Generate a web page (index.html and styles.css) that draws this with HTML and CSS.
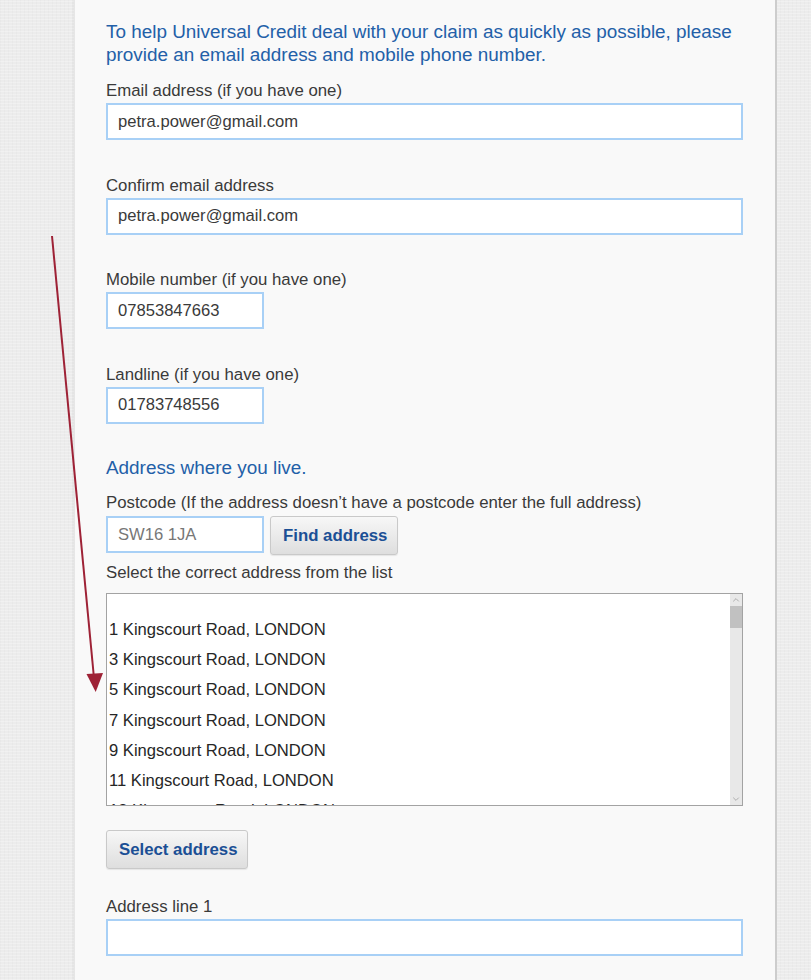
FILE: index.html
```html
<!DOCTYPE html>
<html lang="en">
<head>
<meta charset="utf-8">
<title>Contact details</title>
<link rel="stylesheet" href="styles.css">
</head>
<body>
<div class="page">
  <main class="panel">
    <h2 class="intro">To help Universal Credit deal with your claim as quickly as possible, please provide an email address and mobile phone number.</h2>

    <div class="field">
      <label class="label">Email address (if you have one)</label>
      <input class="input wide" type="text" value="petra.power@gmail.com">
    </div>
    <div class="field">
      <label class="label">Confirm email address</label>
      <input class="input wide" type="text" value="petra.power@gmail.com">
    </div>
    <div class="field">
      <label class="label">Mobile number (if you have one)</label>
      <input class="input short" type="text" value="07853847663">
    </div>
    <div class="field last">
      <label class="label">Landline (if you have one)</label>
      <input class="input short" type="text" value="01783748556">
    </div>

    <h2 class="section">Address where you live.</h2>
    <label class="label postcode-label">Postcode (If the address doesn’t have a postcode enter the full address)</label>
    <div class="postcode-row">
      <input class="input short muted" type="text" value="SW16 1JA">
      <button class="btn" type="button">Find address</button>
    </div>
    <label class="label list-label">Select the correct address from the list</label>
    <div class="listbox">
      <ul class="options">
        <li class="opt blank"></li>
        <li class="opt">1 Kingscourt Road, LONDON</li>
        <li class="opt">3 Kingscourt Road, LONDON</li>
        <li class="opt">5 Kingscourt Road, LONDON</li>
        <li class="opt">7 Kingscourt Road, LONDON</li>
        <li class="opt">9 Kingscourt Road, LONDON</li>
        <li class="opt">11 Kingscourt Road, LONDON</li>
        <li class="opt">13 Kingscourt Road, LONDON</li>
      </ul>
      <div class="scrollbar">
        <svg class="chev" width="13" height="11" viewBox="0 0 13 11"><path d="M3.5 7 L6.5 4 L9.5 7" fill="none" stroke="#a8a8a8" stroke-width="1"/></svg>
        <div class="thumb"></div>
        <div class="track"></div>
        <svg class="chev" width="13" height="11" viewBox="0 0 13 11"><path d="M3.5 4 L6.5 7 L9.5 4" fill="none" stroke="#a8a8a8" stroke-width="1"/></svg>
      </div>
    </div>
    <button class="btn select-btn" type="button">Select address</button>
    <label class="label addr-label">Address line 1</label>
    <input class="input wide" type="text" value="">
  </main>
  <svg class="annotation" width="811" height="980" viewBox="0 0 811 980">
    <line x1="52" y1="236" x2="93.8" y2="676" stroke="#9e2236" stroke-width="2"/>
    <polygon points="86.5,674 103,673 95.7,692" fill="#9e2236"/>
  </svg>
</div>
</body>
</html>
```
FILE: styles.css
```css
* { box-sizing: border-box; }
html, body { margin: 0; padding: 0; }
body {
  background-color: #ececec;
  background-image:
    repeating-linear-gradient(0deg, rgba(255,255,255,0.25) 0 1px, transparent 1px 3px),
    repeating-linear-gradient(90deg, rgba(0,0,0,0.015) 0 1px, transparent 1px 4px);
  font-family: "Liberation Sans", Arial, sans-serif;
  color: #333;
}
.page {
  position: relative;
  width: 811px;
  height: 980px;
  overflow: hidden;
}
.panel {
  margin-left: 74px;
  width: 703px;
  height: 980px;
  background: #f9f9f9;
  border-right: 2px solid #cdcdcd;
  border-left: 1px solid #e6e6e6;
  box-shadow: -1px 0 2px rgba(0,0,0,0.05);
  padding: 20px 32px 0 31px;
}
.intro, .section {
  margin: 0;
  font-weight: normal;
  font-size: 18.9px;
  line-height: 23px;
  color: #2360a8;
}
.intro { margin-bottom: 15px; }
.section { margin-top: 32px; margin-bottom: 14.5px; }
.label {
  display: block;
  font-size: 16.8px;
  line-height: 20px;
  color: #3a3a3a;
  margin-bottom: 2px;
  white-space: nowrap;
}
.field { margin-bottom: 35.5px; }
.field.last { margin-bottom: 0; }
.input {
  display: block;
  height: 37px;
  border: 2px solid #a8d0f6;
  background: #fff;
  font-family: "Liberation Sans", Arial, sans-serif;
  font-size: 16.6px;
  color: #3a3a3a;
  padding: 0 10px;
  outline: none;
  margin: 0;
}
.input.wide { width: 637px; }
.input.short { width: 158px; }
.input.muted { color: #777; }
.postcode-label { margin-bottom: 3px; }
.postcode-row {
  display: flex;
  align-items: flex-start;
  gap: 6px;
}
.btn {
  height: 39px;
  padding: 0 12px;
  border: 1px solid #c9c9c9;
  border-radius: 3px;
  background: linear-gradient(#f7f7f7, #dedede);
  box-shadow: 0 1px 1px rgba(0,0,0,0.08);
  font-family: "Liberation Sans", Arial, sans-serif;
  font-weight: bold;
  font-size: 16.8px;
  color: #1b4f95;
  white-space: nowrap;
}
.postcode-row .btn { width: 128px; }
.list-label { margin-top: 8px; margin-bottom: 10px; }
.listbox {
  display: flex;
  width: 637px;
  height: 213px;
  border: 1px solid #a3a3a3;
  background: #fff;
  overflow: hidden;
}
.options {
  flex: 1;
  list-style: none;
  margin: 0;
  padding: 0 0 0 2px;
  font-size: 16.6px;
  color: #262626;
}
.opt { height: 30.2px; line-height: 30.2px; white-space: nowrap; }
.opt.blank { height: 21px; }
.scrollbar {
  width: 12px;
  display: flex;
  flex-direction: column;
  background: #e8e8e8;
}
.chev { display: block; width: 12px; height: 12px; }
.thumb {
  height: 22px;
  background: #c1c1c1;
}
.track { flex: 1; }
.select-btn {
  display: block;
  width: 142px;
  margin-top: 24px;
}
.addr-label { margin-top: 28px; }
.annotation {
  position: absolute;
  left: 0;
  top: 0;
  pointer-events: none;
}
```
